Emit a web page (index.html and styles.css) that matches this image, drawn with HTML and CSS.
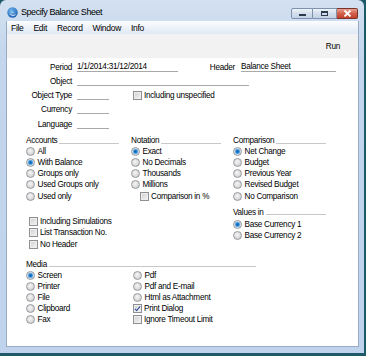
FILE: index.html
```html
<!DOCTYPE html>
<html lang="en">
<head>
<meta charset="UTF-8" />
<meta name="viewport" content="width=device-width, initial-scale=1.0" />
<title>Specify Balance Sheet</title>
<link rel="stylesheet" href="styles.css">
</head>
<body>
<div class="window">
  <div class="titlebar">
    <svg class="app-icon" width="11" height="11" viewBox="0 0 11 11">
      <defs>
        <radialGradient id="ig" cx="40%" cy="35%" r="70%">
          <stop offset="0" stop-color="#6fb7f0"/>
          <stop offset="1" stop-color="#1c5fae"/>
        </radialGradient>
      </defs>
      <circle cx="5.5" cy="5.5" r="5.2" fill="url(#ig)"/>
      <path d="M2.2 4.2 C2.6 7.6 6.4 9.2 9.2 7 C7.6 9.8 2.6 9.6 2.2 4.2 Z" fill="#fff"/>
      <path d="M3.4 3.6 C4.4 5.8 6.6 6.2 8 5.2 C6.8 6.8 4 6.6 3.4 3.6 Z" fill="#fff" opacity="0.85"/>
    </svg>
    <span class="title">Specify Balance Sheet</span>
    <div class="win-buttons">
      <div class="wbtn min"><span></span></div>
      <div class="wbtn max"><span></span></div>
      <div class="wbtn close">
        <svg width="9" height="7" viewBox="0 0 9 7"><path d="M1.5 0.5 L7.5 6.5 M7.5 0.5 L1.5 6.5" stroke="#fff" stroke-width="1.8"/></svg>
      </div>
    </div>
  </div>

  <div class="client">
    <div class="menubar">
      <span>File</span>
      <span>Edit</span>
      <span>Record</span>
      <span>Window</span>
      <span>Info</span>
    </div>

    <div class="toolbar">
      <span>Run</span>
    </div>

    <div class="form">
      <div class="fields">
        <div class="row">
          <label class="lbl">Period</label>
          <div class="field w-period">1/1/2014:31/12/2014</div>
          <label class="lbl lbl-header">Header</label>
          <div class="field w-header">Balance Sheet</div>
        </div>
        <div class="row">
          <label class="lbl">Object</label>
          <div class="field w-object"></div>
        </div>
        <div class="row">
          <label class="lbl">Object Type</label>
          <div class="field w-short"></div>
          <div class="opt check-unspec"><span class="box"></span>Including unspecified</div>
        </div>
        <div class="row">
          <label class="lbl">Currency</label>
          <div class="field w-short"></div>
        </div>
        <div class="row">
          <label class="lbl">Language</label>
          <div class="field w-short"></div>
        </div>
      </div>

      <div class="groups">
        <div class="group">
          <div class="head">Accounts</div>
          <div class="opt"><span class="radio"></span>All</div>
          <div class="opt"><span class="radio on"></span>With Balance</div>
          <div class="opt"><span class="radio"></span>Groups only</div>
          <div class="opt"><span class="radio"></span>Used Groups only</div>
          <div class="opt"><span class="radio"></span>Used only</div>
          <div class="checks">
            <div class="opt chk"><span class="box"></span>Including Simulations</div>
            <div class="opt chk"><span class="box"></span>List Transaction No.</div>
            <div class="opt chk"><span class="box"></span>No Header</div>
          </div>
        </div>
        <div class="group">
          <div class="head">Notation</div>
          <div class="opt"><span class="radio on"></span>Exact</div>
          <div class="opt"><span class="radio"></span>No Decimals</div>
          <div class="opt"><span class="radio"></span>Thousands</div>
          <div class="opt"><span class="radio"></span>Millions</div>
          <div class="opt chk-indent"><span class="box"></span>Comparison in %</div>
        </div>
        <div class="group last">
          <div class="head">Comparison</div>
          <div class="opt"><span class="radio on"></span>Net Change</div>
          <div class="opt"><span class="radio"></span>Budget</div>
          <div class="opt"><span class="radio"></span>Previous Year</div>
          <div class="opt"><span class="radio"></span>Revised Budget</div>
          <div class="opt"><span class="radio"></span>No Comparison</div>
          <div class="head head-values">Values in</div>
          <div class="opt"><span class="radio on"></span>Base Currency 1</div>
          <div class="opt"><span class="radio"></span>Base Currency 2</div>
        </div>
      </div>

      <div class="media">
        <div class="head">Media</div>
        <div class="media-cols">
          <div>
            <div class="opt"><span class="radio on"></span>Screen</div>
            <div class="opt"><span class="radio"></span>Printer</div>
            <div class="opt"><span class="radio"></span>File</div>
            <div class="opt"><span class="radio"></span>Clipboard</div>
            <div class="opt"><span class="radio"></span>Fax</div>
          </div>
          <div>
            <div class="opt"><span class="radio"></span>Pdf</div>
            <div class="opt"><span class="radio"></span>Pdf and E-mail</div>
            <div class="opt"><span class="radio"></span>Html as Attachment</div>
            <div class="opt"><span class="box checked"></span>Print Dialog</div>
            <div class="opt"><span class="box"></span>Ignore Timeout Limit</div>
          </div>
        </div>
      </div>
    </div>
  </div>
</div>
</body>
</html>
```

FILE: styles.css
```css
body {
  margin: 0;
  background: #1d5a68;
  font-family: "Liberation Sans", Arial, sans-serif;
  font-size: 8.2px;
  letter-spacing: -0.28px;
  color: #000;
}
.window {
  width: 364px;
  height: 353px;
  display: flex;
  flex-direction: column;
  background: linear-gradient(#d3e0f0, #c3d6ed 60px, #bfd3ec);
  border-radius: 6px 6px 0 0;
  box-sizing: border-box;
}
.titlebar {
  height: 21px;
  box-sizing: border-box;
  padding: 3px 6px 0 7px;
  display: flex;
  align-items: center;
}
.app-icon {
  margin-right: 3px;
}
.title {
  font-size: 9px;
  letter-spacing: -0.45px;
  color: #000;
}
.win-buttons {
  margin-left: auto;
  display: flex;
  margin-top: 2px;
}
.wbtn {
  height: 11px;
  box-sizing: border-box;
  border: 1px solid #7f92ab;
  background: linear-gradient(#eef3f9, #d2deec 50%, #c4d3e6);
  display: flex;
  align-items: center;
  justify-content: center;
}
.wbtn.min {
  width: 22px;
  border-radius: 2px 0 0 2px;
}
.wbtn.min span {
  width: 7px;
  height: 2px;
  background: #2c3a4e;
  margin-top: 3px;
}
.wbtn.max {
  width: 24px;
  border-left: none;
}
.wbtn.max span {
  width: 7px;
  height: 5px;
  box-sizing: border-box;
  border: 1px solid #2c3a4e;
  border-top-width: 2px;
}
.wbtn.close {
  width: 21px;
  border: 1px solid #7a3328;
  border-left: none;
  border-radius: 0 2px 2px 0;
  background: linear-gradient(#e8a292, #d2604c 50%, #c1422c);
}
.client {
  flex: 1;
  margin: 0 5px 6px 6px;
  border: 1px solid #97abc4;
  border-top: none;
  display: flex;
  flex-direction: column;
}
.menubar {
  height: 13px;
  display: flex;
  align-items: center;
  background: linear-gradient(#fcfdfe, #dfe8f5);
  font-size: 8.5px;
  letter-spacing: -0.3px;
  color: #000;
}
.menubar span {
  padding: 0 5px 0 4px;
  margin-right: 1px;
}
.toolbar {
  height: 24px;
  background: #f2f2f2;
  display: flex;
  align-items: center;
  justify-content: flex-end;
  padding-right: 18px;
}
.form {
  flex: 1;
  background: #fff;
  padding-top: 2.6px;
}
.row {
  height: 14.1px;
  display: flex;
  align-items: center;
}
.lbl {
  width: 65px;
  text-align: right;
  margin-right: 5px;
}
.lbl-header {
  width: 57px;
  margin-right: 6px;
}
.field {
  height: 8px;
  line-height: 8px;
  border-bottom: 1px solid #a9a9a9;
  white-space: nowrap;
}
.w-period { width: 101px; }
.w-header { width: 95px; }
.w-object { width: 172px; }
.w-short { width: 32px; }
.check-unspec {
  margin-left: 24px;
}
.opt {
  height: 11.1px;
  display: flex;
  align-items: center;
  white-space: nowrap;
}
.radio {
  width: 9px;
  height: 9px;
  box-sizing: border-box;
  border-radius: 50%;
  border: 1px solid #979a9e;
  background: radial-gradient(circle at 45% 40%, #f6f6f6, #dcdcdc 55%, #c2c2c2);
  margin-right: 2.5px;
  flex-shrink: 0;
}
.radio.on {
  background: radial-gradient(circle at 50% 50%, #0d5aa7 0, #2f86d2 1.6px, #8cc4ee 2.6px, #e6e6e6 3.2px, #c6c6c6);
}
.box {
  width: 9px;
  height: 9px;
  box-sizing: border-box;
  border: 1px solid #8e9093;
  background: linear-gradient(135deg, #cfcfcf, #f5f5f5);
  box-shadow: inset 0 0 0 1px #eeeeee;
  margin-right: 2px;
  flex-shrink: 0;
  position: relative;
}
.box.checked::after {
  content: "";
  position: absolute;
  left: 2px;
  top: 0;
  width: 2px;
  height: 5px;
  border: solid #2a4f9c;
  border-width: 0 1.5px 1.5px 0;
  transform: rotate(40deg);
}
.groups {
  display: grid;
  grid-template-columns: 105px 102px 93px;
  padding-left: 19px;
  margin-top: 4px;
}
.head {
  height: 11.1px;
  display: flex;
  align-items: center;
  margin-right: 12px;
}
.head::after {
  content: "";
  flex: 1;
  height: 0;
  border-top: 1px solid #c8c8c8;
  margin: 5px 0 0 2px;
}
.group.last .head {
  margin-right: 0;
}
.head-values {
  margin-top: 5px;
  margin-bottom: 1px;
}
.checks {
  margin-top: 13.6px;
}
.checks .opt {
  height: 11.6px;
  padding-left: 3px;
}
.chk-indent {
  padding-left: 9px;
}
.media {
  padding-left: 19px;
  margin-top: 8.7px;
}
.media .head {
  width: 230px;
  margin-right: 0;
}
.media-cols {
  display: grid;
  grid-template-columns: 107px 150px;
}
```
